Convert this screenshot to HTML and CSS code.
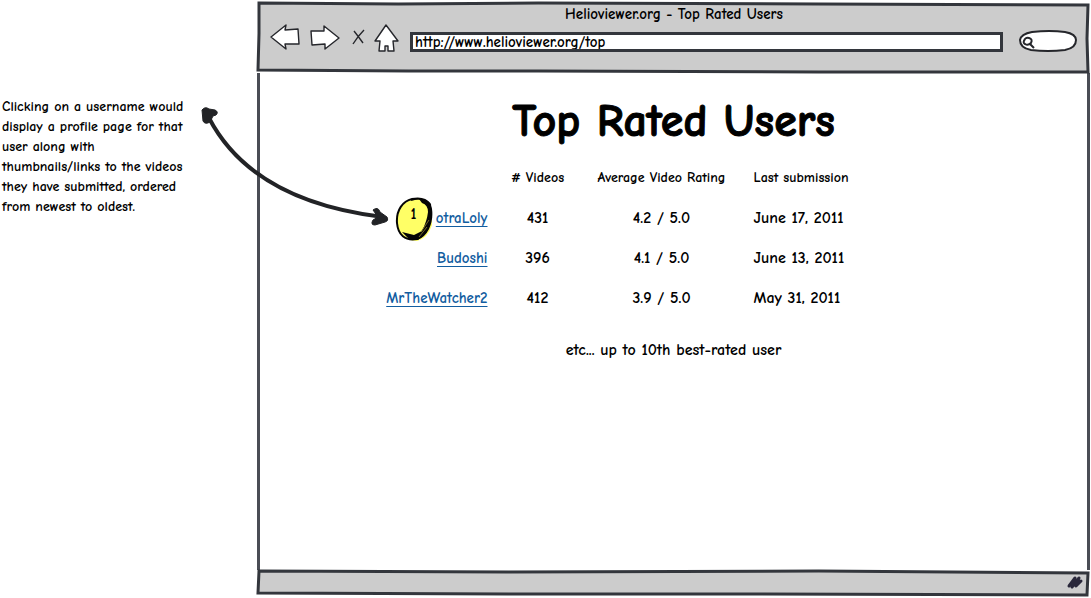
FILE: index.html
```
<!DOCTYPE html>
<html lang="en">
<head>
<meta charset="utf-8">
<title>Helioviewer.org - Top Rated Users</title>
<link rel="stylesheet" href="styles.css">
</head>
<body>
<div class="board">
  <aside class="note">
    <p class="note-text">Clicking on a username would<br>display a profile page for that<br>user along with<br>thumbnails/links to the videos<br>they have submitted, ordered<br>from newest to oldest.</p>
    <svg class="note-arrow" viewBox="0 0 190 120" aria-hidden="true">
      <path d="M8 14C41 77 108 104 182 113" fill="none" stroke="#222326" stroke-width="4"/>
      <path d="M1 6Q4 2 8 5L14 6Q18 8 15 11L12 12L9 18Q4 21 2 17Z" fill="#222326" stroke="#222326" stroke-width="1" stroke-linejoin="round"/>
      <path d="M172 106Q177 102 179 108L186 113Q188 117 184 118L174 121Q169 121 172 116L177 113Z" fill="#222326" stroke="#222326" stroke-width="1" stroke-linejoin="round"/>
    </svg>
  </aside>

  <div class="browser">
    <header class="chrome">
      <svg class="sketch" viewBox="0 0 830 68" preserveAspectRatio="none" aria-hidden="true">
        <path d="M1 0L140 1L280 0L560 1L829 2L828 35L829 68L560 68L280 67L150 67L0 66L1 30Z"/>
      </svg>
      <div class="window-title">Helioviewer.org - Top Rated Users</div>
      <div class="toolbar">
        <button class="tool" type="button" aria-label="Back">
          <svg width="30" height="28" viewBox="0 0 30 28"><path d="M1 12L16 0L15 5L28 4L29 19L15 19L16 24Z"/></svg>
        </button>
        <button class="tool forward" type="button" aria-label="Forward">
          <svg width="30" height="28" viewBox="0 0 30 28"><path d="M1 6L14 6L14 1L29 13L15 24L15 19L2 20Z"/></svg>
        </button>
        <button class="tool stop" type="button" aria-label="Stop">
          <svg width="14" height="28" viewBox="0 0 14 28"><path d="M3 6Q7 11 12 18M13 5Q7 11 2 19" fill="none"/></svg>
        </button>
        <button class="tool home" type="button" aria-label="Home">
          <svg width="26" height="28" viewBox="0 0 26 28"><path d="M12 0L24 16L19 16L20 26L14 26L14 21L11 21L11 26L5 26L6 16L1 16Z"/></svg>
        </button>
        <input class="address" type="text" aria-label="Address" value="http://www.helioviewer.org/top">
        <label class="search">
          <svg class="search-shape" viewBox="0 0 60 22" aria-hidden="true">
            <path d="M14 2Q32 0 47 2Q58 4 58 10Q58 18 47 20Q30 22 13 20Q2 18 2 10Q3 4 14 2Z" fill="#fff" stroke="#25262b" stroke-width="2"/>
            <path d="M6 11Q7 7 11 8Q15 9 13 13Q10 16 7 14Q5 13 6 11M12 14L16 18" fill="none" stroke="#25262b" stroke-width="2"/>
          </svg>
          <input class="search-input" type="search" aria-label="Search">
        </label>
      </div>
    </header>

    <main class="page">
      <h1 class="heading">Top Rated Users</h1>
      <div class="table-area">
        <table class="users">
          <colgroup><col class="col-user"><col class="col-videos"><col class="col-rating"><col class="col-date"></colgroup>
          <thead>
            <tr><td></td><th scope="col"># Videos</th><th scope="col">Average Video Rating</th><th scope="col" class="date">Last submission</th></tr>
          </thead>
          <tbody>
            <tr>
              <td class="user">
                <span class="marker">
                  <svg class="marker-shape" viewBox="0 0 40 46" aria-hidden="true">
                    <path d="M19 3Q34 0 37 12L38 29Q34 42 23 45Q5 44 3 29Q0 10 19 3Z" fill="#ff6"/>
                    <path d="M17 4C27 1 35 4 37 13C39 28 32 40 23 43C11 45 4 39 3 27C2 14 9 5 18 3C28 1 33 4 36 8" fill="none" stroke="#050505" stroke-width="2"/>
                    <path d="M28 7Q34 9 34 16Q33 25 28 35L20 39L8 36L15 43L24 44Q34 37 35 30Q39 20 37 8L31 4L25 3Z" fill="#050505"/>
                    <path d="M27 36L35 24M25 41L33 31" fill="none" stroke="#776d28" stroke-width="1"/>
                  </svg>
                  <span class="marker-number">1</span>
                </span>
                <a href="#otraLoly">otraLoly</a>
              </td>
              <td>431</td><td>4.2 / 5.0</td><td class="date">June 17, 2011</td>
            </tr>
            <tr><td class="user"><a href="#Budoshi">Budoshi</a></td><td>396</td><td>4.1 / 5.0</td><td class="date">June 13, 2011</td></tr>
            <tr><td class="user"><a href="#MrTheWatcher2">MrTheWatcher2</a></td><td>412</td><td>3.9 / 5.0</td><td class="date">May 31, 2011</td></tr>
          </tbody>
        </table>
      </div>
      <p class="more">etc... up to 10th best-rated user</p>
    </main>

    <footer class="statusbar">
      <svg class="sketch" viewBox="0 0 830 24" preserveAspectRatio="none" aria-hidden="true">
        <path d="M1 0L250 1L560 0L829 2L828 24L500 23L250 23L0 22Z"/>
      </svg>
      <svg class="grip" width="18" height="16" viewBox="0 0 18 16" aria-hidden="true">
        <path d="M3 11L9 3L6 12L13 3L10 11L15 6" fill="none" stroke="#29273a" stroke-width="3" stroke-linejoin="round" stroke-linecap="round"/>
      </svg>
    </footer>
  </div>
</div>
</body>
</html>
```
FILE: styles.css
```
* { box-sizing: border-box; }

body {
  margin: 0;
  background: #fff;
  color: #000;
  font: 700 15px/20px "Comic Sans MS", "Comic Neue", Inter, "Noto Sans", sans-serif;
}

.board {
  display: grid;
  grid-template-columns: 257px 1fr;
  min-height: 100vh;
  padding: 2px 1px 2px 0;
}

.note {
  position: relative;
  padding: 95px 0 0 2px;
}

.note-text {
  margin: 0;
  font-size: 14px;
}

.note-arrow {
  position: absolute;
  z-index: 2;
  left: 201px;
  top: 102px;
  width: 190px;
  height: 120px;
  overflow: visible;
}

.browser {
  display: flex;
  flex-direction: column;
}

.chrome {
  position: relative;
  z-index: 1;
  padding: 2px 12px 19px 13px;
}

.sketch {
  position: absolute;
  z-index: -1;
  inset: 1px;
  width: calc(100% - 2px);
  height: calc(100% - 2px);
  overflow: visible;
  fill: #ccc;
  stroke: #33363c;
  stroke-width: 3;
}

.sketch path { vector-effect: non-scaling-stroke; }

.window-title { text-align: center; }

.toolbar {
  display: flex;
  align-items: center;
  height: 30px;
}

.tool {
  display: flex;
  padding: 0;
  border: 0;
  background: none;
}

.tool svg {
  fill: #fff;
  stroke: #25262b;
  stroke-width: 1.4;
  stroke-linejoin: round;
  overflow: visible;
}

.forward { margin-left: 10px; }
.stop { margin-left: 11px; }
.home { margin-left: 9px; }

.address {
  flex: 1;
  min-width: 0;
  height: 20px;
  margin: 6px 15px 0 10px;
  padding: 0 2px;
  border: 3px solid #33363c;
  background: #fff;
  color: inherit;
  font: inherit;
}

.search {
  position: relative;
  width: 60px;
  height: 22px;
  margin-top: 4px;
}

.search-shape {
  display: block;
  width: 60px;
  height: 22px;
}

.search-input {
  position: absolute;
  inset: 3px 6px 3px 18px;
  width: 36px;
  border: 0;
  background: none;
  font: inherit;
  outline: 0;
}

.page {
  flex: 1;
  padding: 24px 3px 0;
  border: solid #4a4d55;
  border-width: 0 3px;
}

.heading {
  margin: 0 0 11px;
  font-size: 46px;
  line-height: 50px;
  text-align: center;
  -webkit-text-stroke: 1px #000;
}

.table-area {
  display: flex;
  justify-content: center;
  padding-right: 112px;
}

.users {
  table-layout: fixed;
  width: 476px;
  border-collapse: collapse;
}

.col-user { width: 116px; }
.col-videos { width: 84px; }
.col-rating { width: 164px; }
.col-date { width: 112px; }

.users td,
.users th {
  height: 40px;
  padding: 0;
  font-weight: inherit;
  text-align: center;
  white-space: nowrap;
}

.users th { font-size: 14px; }
.users td { font-size: 16px; }

.users .user {
  position: relative;
  padding-right: 8px;
  font-size: 15px;
  text-align: right;
}

.users .date {
  padding-left: 10px;
  text-align: left;
}

.user a {
  color: #125da0;
  text-decoration-thickness: 1px;
  text-underline-offset: 3px;
}

.marker {
  position: absolute;
  left: 14px;
  top: -2px;
  width: 40px;
  height: 46px;
  text-align: center;
}

.marker-shape {
  position: absolute;
  inset: 0;
}

.marker-number {
  position: relative;
  line-height: 36px;
}

.more {
  margin: 22px 0 0;
  font-size: 16px;
  text-align: center;
}

.statusbar {
  position: relative;
  z-index: 1;
  display: flex;
  justify-content: flex-end;
  align-items: center;
  height: 26px;
  padding-right: 6px;
}
```
